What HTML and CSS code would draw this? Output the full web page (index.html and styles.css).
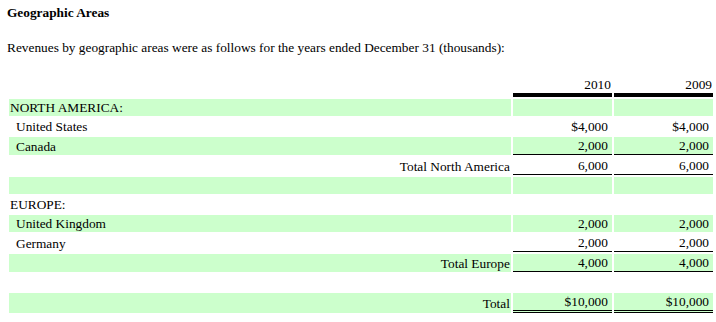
FILE: index.html
```html
<!DOCTYPE html>
<html lang="en">
<head>
    <meta charset="UTF-8">
    <title>Geographic Areas</title>
    <link rel="stylesheet" href="styles.css">
</head>
<body>
    <div class="report">
        <h3 class="title">Geographic Areas</h3>
        <p class="intro">Revenues by geographic areas were as follows for the years ended December 31 (thousands):</p>

        <table class="areas">
            <tr class="head">
                <td class="label"></td>
                <td class="year">2010</td>
                <td class="year">2009</td>
            </tr>
            <tr class="shade">
                <td class="label">NORTH AMERICA:</td>
                <td></td>
                <td></td>
            </tr>
            <tr>
                <td class="label item">United States</td>
                <td class="num">$4,000</td>
                <td class="num">$4,000</td>
            </tr>
            <tr class="shade">
                <td class="label item">Canada</td>
                <td class="num line">2,000</td>
                <td class="num line">2,000</td>
            </tr>
            <tr>
                <td class="label total">Total North America</td>
                <td class="num line">6,000</td>
                <td class="num line">6,000</td>
            </tr>
            <tr class="shade">
                <td class="label"></td>
                <td></td>
                <td></td>
            </tr>
            <tr>
                <td class="label">EUROPE:</td>
                <td></td>
                <td></td>
            </tr>
            <tr class="shade">
                <td class="label item">United Kingdom</td>
                <td class="num">2,000</td>
                <td class="num">2,000</td>
            </tr>
            <tr>
                <td class="label item">Germany</td>
                <td class="num line">2,000</td>
                <td class="num line">2,000</td>
            </tr>
            <tr class="shade">
                <td class="label total">Total Europe</td>
                <td class="num line">4,000</td>
                <td class="num line">4,000</td>
            </tr>
            <tr>
                <td class="label"></td>
                <td></td>
                <td></td>
            </tr>
            <tr class="shade">
                <td class="label total">Total</td>
                <td class="num double">$10,000</td>
                <td class="num double">$10,000</td>
            </tr>
        </table>
    </div>
</body>
</html>
```

FILE: styles.css
```css
* {
    margin: 0;
    padding: 0;
}

body {
    font-family: "Liberation Serif", "Times New Roman", serif;
    font-size: 13.33px;
    line-height: 15px;
    color: #000;
    background-color: #fff;
}

.report {
    padding: 5px 0 0 7px;
}

.title {
    font-size: 13.33px;
    font-weight: bold;
}

.intro {
    margin-top: 20px;
}

.areas {
    margin-top: 19px;
    border-collapse: separate;
    border-spacing: 2px;
    width: 708px;
}

.areas td {
    height: 15px;
    padding: 1px 4px 1px 1px;
    white-space: nowrap;
}

.areas .label {
    width: 498px;
}

.areas .year,
.areas .num {
    width: 95px;
    text-align: right;
}

.areas .head .year {
    padding-right: 1px;
    border-bottom: 4px solid #000;
}

.shade td {
    background-color: #ccffcc;
}

.areas .item {
    padding-left: 7px;
}

.areas .total {
    text-align: right;
    padding-right: 1px;
}

.line {
    border-bottom: 1px solid #000;
}

.double {
    border-bottom: 3px double #000;
}
```
